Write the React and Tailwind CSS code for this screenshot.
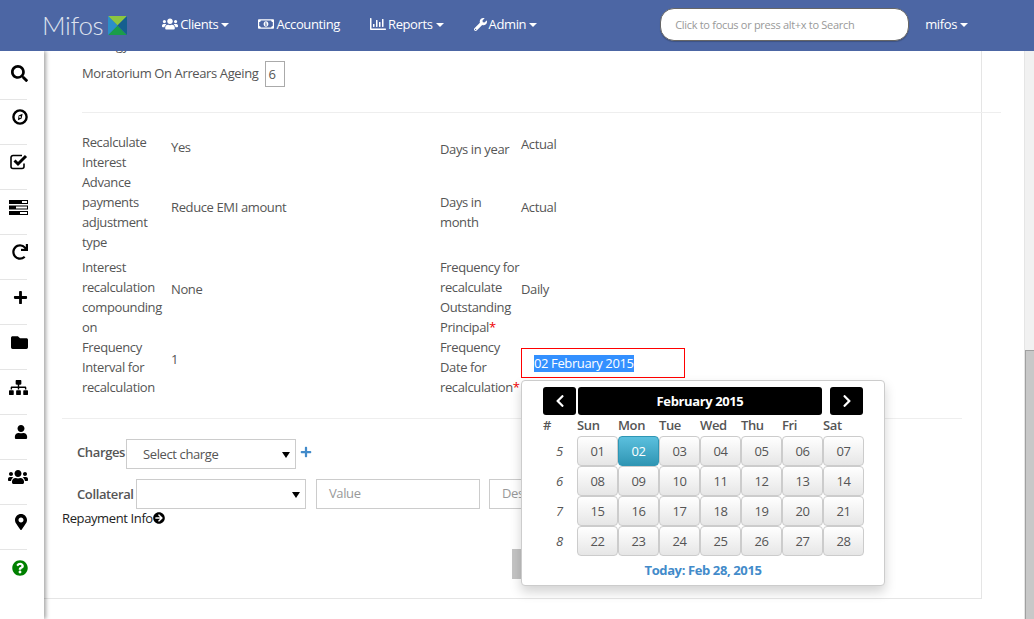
import React from "react";
import { FaSearch, FaRedo, FaPlus, FaFolder, FaSitemap, FaUser, FaUsers, FaMapMarkerAlt, FaQuestionCircle, FaRegMoneyBillAlt, FaRegChartBar, FaWrench, FaArrowCircleRight, FaChevronLeft, FaChevronRight } from "react-icons/fa";

const Caret = () => <span className="inline-block ml-[3px] mt-[2px] w-0 h-0 border-x-[4px] border-x-transparent border-t-[4px] border-t-white" />;

const NavItem = ({ icon, label, caret, className }) => (
  <div className={`flex items-center text-white text-[13px] tracking-[-0.38px] -mt-[1px] ${className}`}>
    {icon}
    <span className={icon ? "ml-[2px]" : ""}>{label}</span>
    {caret && <Caret />}
  </div>
);

const Logo = () => (
  <div className="flex items-center">
    <span className="text-[26px] font-light text-[#dde2ee] leading-none -ml-[2px]" style={{ fontFamily: "Lato, sans-serif" }}>Mifos</span>
    <svg width="19" height="19" viewBox="0 0 19 19" className="ml-[5px] mt-[1px]">
      <polygon points="0,0 19,0 9.5,9.5" fill="#8cc63f" />
      <polygon points="0,19 19,19 9.5,9.5" fill="#1a9d4a" />
      <polygon points="0,0 0,19 9.5,9.5" fill="#2a8fc9" />
      <polygon points="19,0 19,19 9.5,9.5" fill="#155f8f" />
    </svg>
  </div>
);

const TasksIcon = () => (
  <svg width="19" height="15" viewBox="0 0 19 15">
    <rect x="0" y="0" width="19" height="4" fill="#000" />
    <rect x="13" y="1" width="5" height="2" fill="#fff" />
    <rect x="0" y="5.5" width="19" height="4" fill="#000" />
    <rect x="7" y="6.5" width="11" height="2" fill="#fff" />
    <rect x="0" y="11" width="19" height="4" fill="#000" />
    <rect x="11" y="12" width="7" height="2" fill="#fff" />
  </svg>
);

const CheckIcon = () => (
  <svg width="18" height="16" viewBox="0 0 18 16" fill="none">
    <path d="M14 9.5V12.5a2 2 0 0 1-2 2H3a2 2 0 0 1-2-2V3.5a2 2 0 0 1 2-2h9" stroke="#000" strokeWidth="1.6" />
    <path d="M4.5 6.5l3.5 3.5 8-8" stroke="#000" strokeWidth="3" />
  </svg>
);

const CompassIcon = () => (
  <svg width="16" height="16" viewBox="0 0 16 16" fill="none">
    <circle cx="8" cy="8" r="6.6" stroke="#000" strokeWidth="2.4" />
    <path d="M10.6 4.8L9.6 9.6 6 11.2 6.6 6.4z" fill="#000" />
    <circle cx="8" cy="8" r="0.9" fill="#fff" />
  </svg>
);

const sideItems = [
  <FaSearch size={17} />,
  <CompassIcon />,
  <CheckIcon />,
  <TasksIcon />,
  <FaRedo size={16} />,
  <FaPlus size={15} />,
  <FaFolder size={17} />,
  <FaSitemap size={19} />,
  <FaUser size={14} />,
  <FaUsers size={20} />,
  <FaMapMarkerAlt size={16} className="-mr-[1px]" />,
  <FaQuestionCircle size={16} className="text-[#008000]" />,
];

const Sidebar = () => (
  <aside className="w-[44px] shrink-0 bg-white shadow-[2px_0_4px_rgba(0,0,0,0.35)] z-[5] relative flex flex-col">
    {sideItems.map((icon, i) => (
      <div key={i} className={`w-[27px] flex items-center justify-end ${i === 0 ? "h-[49px] pb-[4px]" : "h-[45px] pb-[10px]"} ${i < 11 ? "border-b border-[#e5e5e5]" : ""}`}>
        <span className="flex justify-end w-[20px] -mr-[1px] text-black">{icon}</span>
      </div>
    ))}
  </aside>
);

const Row = ({ children, className }) => <div className={`flex ${className}`}>{children}</div>;

const days = [
  ["5", ["01", "02", "03", "04", "05", "06", "07"]],
  ["6", ["08", "09", "10", "11", "12", "13", "14"]],
  ["7", ["15", "16", "17", "18", "19", "20", "21"]],
  ["8", ["22", "23", "24", "25", "26", "27", "28"]],
];

const Calendar = () => (
  <div className="absolute left-0 top-[43px] w-[364px] h-[206px] bg-white border border-[#ccc] rounded-[4px] shadow-[0_6px_12px_rgba(0,0,0,0.175)] z-[3] pl-[21px] pt-[6px]">
    <div className="flex">
      <div className="w-[33px] h-[28px] bg-black rounded-[3px] text-white flex items-center justify-center"><FaChevronLeft size={14} /></div>
      <div className="ml-[2px] w-[244px] h-[28px] pb-[1px] bg-black rounded-[3px] text-white text-[13px] font-bold flex items-center justify-center">February 2015</div>
      <div className="ml-[8px] w-[33px] h-[28px] bg-black rounded-[3px] text-white flex items-center justify-center"><FaChevronRight size={14} /></div>
    </div>
    <div className="flex h-[21px] pb-[1px] items-center text-[13px] font-semibold text-[#555]">
      <span className="w-[34px]">#</span>
      {["Sun", "Mon", "Tue", "Wed", "Thu", "Fri", "Sat"].map((d) => <span key={d} className="w-[41px]">{d}</span>)}
    </div>
    {days.map(([w, ds]) => (
      <div key={w} className="flex h-[30px]">
        <span className="w-[34px] pl-[13px] italic text-[#555] flex items-center">{w}</span>
        {ds.map((d) => (
          <span
            key={d}
            className={`w-[41px] h-[30px] flex items-center justify-center rounded-[4px] border ${d === "02" ? "text-white bg-gradient-to-b from-[#5bc0de] to-[#2f96b4] border-[#2f96b4]" : "text-[#555] bg-gradient-to-b from-white to-[#e6e6e6] border-[#ccc]"}`}
          >
            {d}
          </span>
        ))}
      </div>
    ))}
    <div className="text-center font-bold text-[#428bca] pr-[21px] mt-[4px]">Today: Feb 28, 2015</div>
  </div>
);

const Field = ({ className, children }) => (
  <div className={`h-[30px] border border-[#ccc] bg-white flex items-center ${className}`}>{children}</div>
);

const Tri = () => <span className="absolute right-[5px] top-[12px] w-0 h-0 border-x-[4px] border-x-transparent border-t-[6px] border-t-black" />;

export default function App() {
  return (
    <div className="h-[619px] w-[1034px] overflow-hidden flex flex-col text-[13px] tracking-[-0.38px] leading-[20px] text-[#555]" style={{ fontFamily: '"Open Sans", sans-serif' }}>
      <header className="h-[51px] shrink-0 bg-[#4c66a4] flex items-center z-10 relative pl-[44px] pb-[2px]">
        <Logo />
        <NavItem className="ml-[35px]" icon={<FaUsers size={16} />} label="Clients" caret />
        <NavItem className="ml-[29px]" icon={<FaRegMoneyBillAlt size={16} />} label="Accounting" />
        <NavItem className="ml-[30px]" icon={<FaRegChartBar size={16} />} label="Reports" caret />
        <NavItem className="ml-[30px]" icon={<FaWrench size={13} />} label="Admin" caret />
        <div className="ml-[123px] w-[249px] h-[33px] rounded-[14px] bg-white border border-[#666] shadow-[0_1px_1px_rgba(0,0,0,0.2)] flex items-center pl-[14px] text-[11px] tracking-[-0.3px] text-[#999]">Click to focus or press alt+x to Search</div>
        <NavItem className="ml-[16px]" label="mifos" caret />
      </header>
      <div className="flex flex-1 min-h-0">
        <Sidebar />
        <main className="flex-1 min-w-0 overflow-hidden">
          <div className="w-[938px] h-[548px] border-r border-b border-[#e5e5e5] relative">
            <div className="pl-[38px] h-[61px] relative">
              <div className="absolute left-[38px] -top-[16px]">Strategy</div>
              <Row className="pt-[10px] items-center">
                <span className="-mt-[2px]">Moratorium On Arrears Ageing</span>
                <span className="ml-[7px] w-[20px] h-[26px] border border-[#aaa] flex items-center pl-[2px]">6</span>
              </Row>
            </div>
            <div className="ml-[38px] w-[919px] h-px bg-[#eee] relative" />
            <div className="pl-[38px] pt-[19px]">
              <Row className="h-[40px]">
                <div className="w-[89px]">Recalculate Interest</div>
                <div className="w-[269px] pt-[5px]">Yes</div>
                <div className="w-[81px] pt-[7px]">Days in year</div>
                <div className="pt-[2px]">Actual</div>
              </Row>
              <Row className="h-[85px]">
                <div className="w-[89px]">Advance payments adjustment type</div>
                <div className="w-[269px] pt-[25px]">Reduce EMI amount</div>
                <div className="w-[81px] pt-[20px] pr-[10px]">Days in month</div>
                <div className="pt-[25px]">Actual</div>
              </Row>
              <Row className="h-[80px]">
                <div className="w-[89px]">Interest recalculation compounding on</div>
                <div className="w-[269px] pt-[22px]">None</div>
                <div className="w-[81px]">Frequency for recalculate Outstanding Principal<span className="text-[#e00]">*</span></div>
                <div className="pt-[22px]">Daily</div>
              </Row>
              <Row className="h-[80px]">
                <div className="w-[89px]">Frequency Interval for recalculation</div>
                <div className="w-[269px] pt-[12px]">1</div>
                <div className="w-[81px]">Frequency Date for recalculation<span className="text-[#e00]">*</span></div>
                <div className="relative pt-[11px]">
                  <div className="h-[30px] w-[164px] border border-[#f00] bg-white flex items-center pl-[12px]">
                    <span className="bg-[#3390ff] text-white leading-[17px]">02 February 2015</span>
                  </div>
                  <Calendar />
                </div>
              </Row>
            </div>
            <div className="ml-[18px] w-[900px] h-px bg-[#eee] mt-[1px]" />
            <div className="pl-[33px] pt-[20px] flex items-start">
              <span className="font-semibold mt-[3px] w-[49px]">Charges</span>
              <Field className="w-[170px] pl-[16px] relative">Select charge<Tri /></Field>
              <FaPlus size={12} className="text-[#428bca] ml-[4px] mt-[7px]" />
            </div>
            <div className="pl-[33px] pt-[10px] flex items-center">
              <span className="font-semibold w-[59px]">Collateral</span>
              <Field className="w-[170px] relative"><Tri /></Field>
              <Field className="w-[164px] ml-[10px] pl-[12px] pb-[2px] text-[#999]">Value</Field>
              <Field className="w-[164px] ml-[9px] pl-[12px] pb-[2px] text-[#999]">Description</Field>
            </div>
            <div className="pl-[18px] mt-[-1px] flex items-center text-[#222] h-[20px]">Repayment Info<FaArrowCircleRight size={12} className="text-black" /></div>
            <div className="ml-[468px] mt-[21px] w-[40px] h-[30px] bg-[#c4c4c4]" />
          </div>
        </main>
        <div className="w-[10px] shrink-0 bg-[#f1f1f1] border-l border-[#e5e5e5] flex flex-col">
          <div className="h-[299px]" />
          <div className="flex-1 bg-[#c8c8c8] border-t border-l border-[#a0a0a0]" />
        </div>
      </div>
    </div>
  );
}
